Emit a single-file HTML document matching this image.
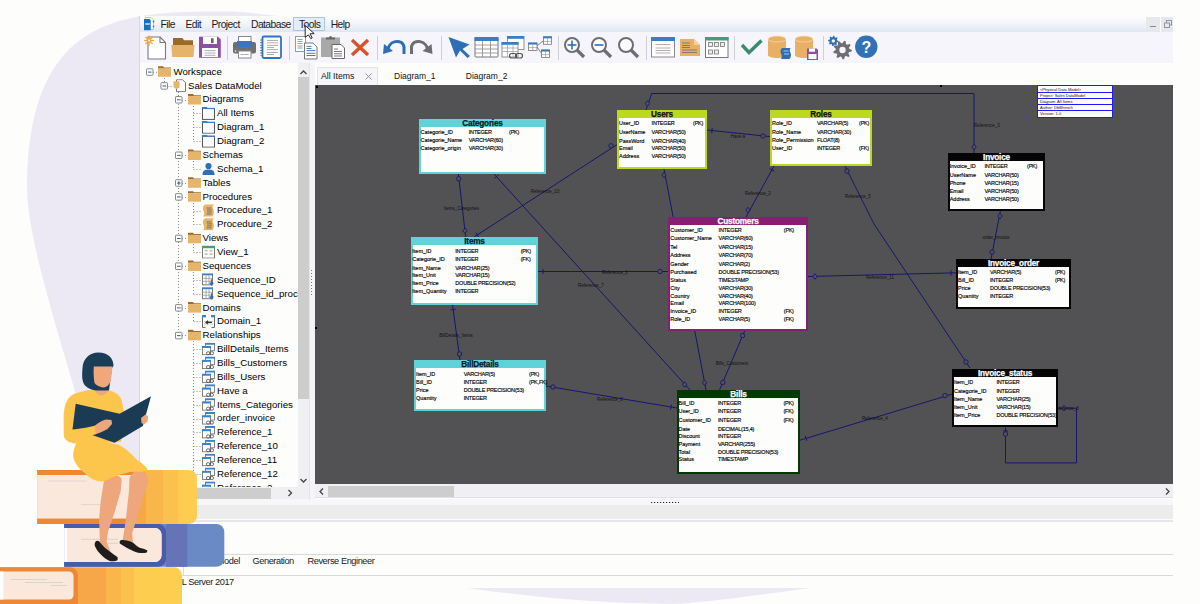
<!DOCTYPE html><html><head><meta charset="utf-8"><style>
*{margin:0;padding:0;box-sizing:border-box}
html,body{width:1200px;height:604px;overflow:hidden;background:#fdfdfc;font-family:"Liberation Sans",sans-serif}
body{position:relative}
.a{position:absolute}
.mi{position:absolute;top:18.5px;font-size:10.3px;letter-spacing:-0.55px;color:#1b1b1b;line-height:12px;white-space:nowrap}
.sep{position:absolute;top:36px;width:1px;height:24px;background:#cfd0d6}
.tr{position:absolute;font-size:9.7px;color:#000;line-height:11px;white-space:nowrap}
.tbl{position:absolute;background:#fdfdfc;border:2px solid}
.th{position:absolute;left:0;margin-top:0.3px;right:0;height:8px;font-weight:bold;-webkit-text-stroke:0.25px currentColor;font-size:8.2px;line-height:10px;text-align:center;letter-spacing:-0.2px;overflow:hidden}
.r{position:absolute;font-size:5.5px;line-height:6px;color:#000;white-space:nowrap;-webkit-text-stroke:0.15px #000}
.ty{letter-spacing:-0.2px}
.lbl{position:absolute;font-size:4.5px;line-height:5px;color:#111;white-space:nowrap}
</style></head><body><svg class="a" style="left:0;top:0" width="1200" height="604"><path fill="#ece9f4" d="M230,11.5 C129,11.5 27.2,9.7 27.2,190 C27.2,260 97.4,441.2 92.5,472 C85.6,515.2 424.6,603.9 672.7,603.9 C732.7,603.9 1184.1,530.8 950,560 L1100,400 L1100,300 C600,50 270,11.5 230,11.5 Z"/></svg>
<div class="a" style="left:139px;top:16px;width:1034px;height:571.5px;background:#fdfdfc;border-left:1px solid #d8d8dc"></div>
<div class="a" style="left:140px;top:16px;width:1006px;height:16px;background:linear-gradient(#fdfdfe,#eef2f8 60%,#dfe7f2)"></div>
<div class="a" style="left:1146px;top:17px;width:14px;height:15px;background:#e6e8ee"></div>
<div class="a" style="left:1161px;top:17px;width:12px;height:15px;background:#e6e8ee"></div>
<div class="a" style="left:1150px;top:25.5px;width:6px;height:1px;background:#8a8a8a"></div>
<svg class="a" style="left:1163.5px;top:20px" width="8" height="8"><rect x="2.5" y="0.5" width="5" height="4.5" fill="none" stroke="#8d98a4"/><rect x="0.5" y="3" width="5" height="4.5" fill="#e6e8ee" stroke="#8d98a4"/></svg>
<div class="a" style="left:293px;top:17px;width:32px;height:14px;background:#e3ecf7;border:1px solid #a9c6e6"></div>
<div class="mi" style="left:160.5px">File</div>
<div class="mi" style="left:185.5px">Edit</div>
<div class="mi" style="left:211.5px">Project</div>
<div class="mi" style="left:251px">Database</div>
<div class="mi" style="left:299px">Tools</div>
<div class="mi" style="left:330.7px">Help</div>
<svg class="a" style="left:140px;top:15px" width="20" height="18"><path d="M5.5,2.5 H11 L13.5,5 V14.5 H5.5z" fill="#fff" stroke="#9cc3e8" stroke-width="0.9"/><circle cx="13.5" cy="6.5" r="0.9" fill="#2f78c4"/><circle cx="13.5" cy="11.3" r="0.9" fill="#2f78c4"/><path d="M4,4 H9 C10,4 10.7,4.7 10.7,5.7 V15.3 H4z" fill="#1a6fc0"/><rect x="5.3" y="8" width="4.4" height="2" fill="#a9cdf0"/></svg>
<div class="a" style="left:140px;top:32px;width:1033px;height:31px;background:#f5f5fb"></div>
<div class="sep" style="left:227px"></div>
<div class="sep" style="left:289px"></div>
<div class="sep" style="left:377px"></div>
<div class="sep" style="left:441px"></div>
<div class="sep" style="left:558px"></div>
<div class="sep" style="left:646px"></div>
<div class="sep" style="left:734px"></div>
<div class="sep" style="left:823px"></div>
<svg class="a" style="left:0;top:0" width="900" height="64">
<path d="M148,37 H160 L165.5,42.5 V59 H148z" fill="#fff" stroke="#78787e" stroke-width="1.1"/><path d="M160,37 V42.5 H165.5" fill="none" stroke="#78787e" stroke-width="1.1"/>
<line x1="144.10" y1="40.50" x2="154.10" y2="40.50" stroke="#f3a43a" stroke-width="1.3"/><line x1="145.56" y1="36.96" x2="152.64" y2="44.04" stroke="#f3a43a" stroke-width="1.3"/><line x1="149.10" y1="35.50" x2="149.10" y2="45.50" stroke="#f3a43a" stroke-width="1.3"/><line x1="152.64" y1="36.96" x2="145.56" y2="44.04" stroke="#f3a43a" stroke-width="1.3"/><circle cx="149.1" cy="40.5" r="2.2" fill="#f3a43a"/><circle cx="149.1" cy="40.5" r="1" fill="#fff"/>
<path d="M173,38 H182.5 L184,40.2 H193 V45 H173z" fill="#9c6a28"/><path d="M171.3,45 H194.5 L193.5,57 H172.2z" fill="#e5b46a"/>
<path d="M199,36.8 H218 L220.8,39.6 V57.7 H199z" fill="#8b50a2"/><rect x="203" y="36.8" width="14" height="7.2" fill="#fff"/><rect x="211" y="38.2" width="2.6" height="4.9" fill="#666"/><rect x="202" y="48" width="16" height="9" fill="#fff"/><path d="M204.5,50.6 h11 M204.5,53 h11 M204.5,55.3 h11" stroke="#999" stroke-width="0.8"/>
<rect x="238.5" y="36.5" width="12.5" height="8" fill="#fff" stroke="#888" stroke-width="1"/><rect x="233" y="42" width="23" height="11.5" rx="2" fill="#6e6e73"/><rect x="237" y="41" width="15" height="6" fill="#3a75bf"/><rect x="238.5" y="51" width="12.5" height="7" fill="#fff" stroke="#888" stroke-width="1"/><path d="M240.5,54.5 h8" stroke="#999" stroke-width="0.8"/><circle cx="235.5" cy="51" r="0.8" fill="#fff"/>
<rect x="262.5" y="36.5" width="18.5" height="21.5" rx="1.5" fill="#fff" stroke="#2f74c0" stroke-width="1.8"/><path d="M267,40.5 h11 M267,42.8 h11 M267,45.4 h11 M267,47.5 h7 M267,49.6 h11 M267,52.5 h11 M267,54.5 h7" stroke="#9a9a9a" stroke-width="0.8"/><path d="M261,39.5 v16" stroke="#333" stroke-width="1.2" stroke-dasharray="1,1.6"/>
<rect x="295.5" y="36.5" width="10" height="15" fill="#fff" stroke="#999" stroke-width="1"/><path d="M297.5,39.5 h5 M297.5,41.5 h5 M297.5,43.5 h5 M297.5,46 h5 M297.5,48 h5" stroke="#4a90d0" stroke-width="0.8"/>
<path d="M304.5,43 H313 L317,47 V59 H304.5z" fill="#fff" stroke="#77777c" stroke-width="1"/><path d="M306.5,46.4 h5 M306.5,48.5 h5 M306.5,50.6 h9 M306.5,53.3 h9 M306.5,55.5 h9" stroke="#2e6fb8" stroke-width="0.9"/>
<rect x="321" y="37.5" width="19" height="19.5" fill="#a8a8a8"/><path d="M326,39.5 h9 v-2 h-3 a1.5,1.5 0 0 0 -3,0 h-3z" fill="#666"/><path d="M332,44.5 H341 L344.5,48 V58.5 H332z" fill="#fff" stroke="#666" stroke-width="1"/><path d="M334,49 h4 M334,51.5 h8 M334,53.8 h8 M334,56 h8" stroke="#555" stroke-width="0.8"/>
<path d="M352,40 L368,55 M368,40 L352,55" stroke="#d9502a" stroke-width="3.4"/>
<path d="M388,52 C387,40 403,38 404,47 V54" fill="none" stroke="#2f6db5" stroke-width="3"/><path d="M383,54 L384,44 L393,51z" fill="#2f6db5"/>
<path d="M427.5,52 C428.5,40 412.5,38 411.5,47 V54" fill="none" stroke="#6d6d72" stroke-width="3"/><path d="M432.5,54 L431.5,44 L422.5,51z" fill="#6d6d72"/>
<path d="M448.5,37 L469.5,44.5 L462.5,49 L470,56 L467.5,58 L460,50.5 L456,57.5z" fill="#2f6db5"/>
<rect x="475" y="37.5" width="23" height="19.5" rx="1" fill="#fff" stroke="#777" stroke-width="1"/><rect x="474.5" y="37" width="24" height="4" fill="#3b7dc4"/><path d="M475,45 h23 M475,49 h23 M475,53 h23 M482.5,41 v16 M490.5,41 v16" stroke="#888" stroke-width="0.8"/>
<rect x="507.5" y="36.5" width="16.5" height="13" fill="#fff" stroke="#888" stroke-width="0.9"/><rect x="507" y="36" width="17" height="2.8" fill="#3b7dc4"/><rect x="502" y="42.5" width="16" height="14.5" fill="#fff" stroke="#888" stroke-width="0.9"/><rect x="501.5" y="42" width="17" height="2.8" fill="#3b7dc4"/><path d="M502,48 h16 M502,51.5 h16 M507.5,45 v12 M513,45 v12" stroke="#999" stroke-width="0.7"/><rect x="509.5" y="53.5" width="7" height="4.5" rx="2.2" fill="none" stroke="#555" stroke-width="1.2"/><rect x="515.5" y="53.5" width="7" height="4.5" rx="2.2" fill="none" stroke="#555" stroke-width="1.2"/>
<path d="M537,46 L543,41 M537,47 L542,54" stroke="#666" stroke-width="0.8"/>
<rect x="528.5" y="43" width="8.5" height="7.5" fill="#fff" stroke="#777" stroke-width="0.8"/><rect x="528.1" y="42.6" width="9.3" height="2" fill="#3b7dc4"/><path d="M528.5,47.6 h8.5 M532.75,45 v5.5" stroke="#888" stroke-width="0.6"/>
<rect x="543.5" y="36.8" width="8" height="7.5" fill="#fff" stroke="#777" stroke-width="0.8"/><rect x="543.1" y="36.4" width="8.8" height="2" fill="#3b7dc4"/><path d="M543.5,41.4 h8 M547.5,38.8 v5.5" stroke="#888" stroke-width="0.6"/>
<rect x="541.5" y="50" width="8" height="7.5" fill="#fff" stroke="#777" stroke-width="0.8"/><rect x="541.1" y="49.6" width="8.8" height="2" fill="#3b7dc4"/><path d="M541.5,54.6 h8 M545.5,52 v5.5" stroke="#888" stroke-width="0.6"/>
<circle cx="572" cy="45" r="7" fill="#fff" stroke="#6d6d72" stroke-width="2"/><path d="M577,50 L584,57" stroke="#6d6d72" stroke-width="3.2"/>
<path d="M567.5,45 h9" stroke="#2f6db5" stroke-width="1.6"/>
<path d="M572,40.5 v9" stroke="#2f6db5" stroke-width="1.6"/>
<circle cx="599" cy="45" r="7" fill="#fff" stroke="#6d6d72" stroke-width="2"/><path d="M604,50 L611,57" stroke="#6d6d72" stroke-width="3.2"/>
<path d="M594.5,45 h9" stroke="#2f6db5" stroke-width="1.6"/>
<circle cx="626" cy="45" r="7" fill="#fff" stroke="#6d6d72" stroke-width="2"/><path d="M631,50 L638,57" stroke="#6d6d72" stroke-width="3.2"/>
<rect x="651.5" y="37.5" width="23" height="19.5" fill="#fff" stroke="#888" stroke-width="1"/><rect x="651" y="37" width="24" height="4" fill="#3b7dc4"/><path d="M655.5,44.5 h15 M655.5,48 h15 M655.5,50.5 h15 M655.5,53 h15" stroke="#a09a9a" stroke-width="0.8"/>
<path d="M680,39 H694 L700,45 V56 H680z" fill="#e9b064"/><path d="M694,39 V45 H700z" fill="#f5cf98"/><path d="M682,43 h8 M682,45.5 h8 M682,47.5 h8 M682,50 h15 M682,52.5 h15" stroke="#6e6a6a" stroke-width="0.8"/>
<rect x="705.5" y="37.5" width="22.5" height="20" fill="#fff" stroke="#777" stroke-width="1"/><rect x="705" y="37" width="23.5" height="3.5" fill="#4a9a7a"/>
<rect x="708.5" y="42.5" width="4" height="4" fill="#eee" stroke="#777" stroke-width="0.8"/>
<rect x="714.5" y="42.5" width="4" height="4" fill="#eee" stroke="#777" stroke-width="0.8"/>
<rect x="720.5" y="42.5" width="4" height="4" fill="#eee" stroke="#777" stroke-width="0.8"/>
<rect x="708.5" y="50" width="4" height="4" fill="#eee" stroke="#777" stroke-width="0.8"/>
<rect x="714.5" y="50" width="4" height="4" fill="#eee" stroke="#777" stroke-width="0.8"/>
<path d="M742,45 L749,52.5 L761.5,40.5" fill="none" stroke="#3f8a6e" stroke-width="3.4"/>
<path d="M768,39 V55 C768,59 786,59 786,55 V39z" fill="#e9b064"/><ellipse cx="777" cy="39" rx="9" ry="3" fill="#e9b064" stroke="#f8e4c4" stroke-width="0.6"/>
<path d="M782,48 h8.5 c-1,1.5 -1,3 0,5 c1,2 0.5,4 -1,6 h-8.5 c1,-1.5 1,-3.5 0,-5.5 c-1,-2 -0.5,-4 1,-5.5z" fill="#2f6db5"/><path d="M783.5,51 h5 M784,54 h5" stroke="#fff" stroke-width="0.6"/>
<path d="M795,39 V55 C795,59 813,59 813,55 V39z" fill="#e9b064"/><ellipse cx="804" cy="39" rx="9" ry="3" fill="#e9b064" stroke="#f8e4c4" stroke-width="0.6"/>
<path d="M807,48.5 H816.5 L818,50 V60 H807z" fill="#8b50a2"/><rect x="809" y="48.5" width="6" height="3.2" fill="#fff"/><rect x="808.5" y="54" width="8" height="5" fill="#fff"/>
<polygon points="851.80,50.00 851.66,51.61 848.89,52.33 848.39,53.40 849.62,55.98 848.48,57.12 845.90,55.89 844.83,56.39 844.11,59.16 842.50,59.30 841.32,56.70 840.17,56.39 837.85,58.05 836.52,57.12 837.29,54.37 836.61,53.40 833.76,53.18 833.34,51.61 835.70,50.00 835.80,48.82 833.76,46.82 834.45,45.35 837.29,45.63 838.13,44.79 837.85,41.95 839.32,41.26 841.32,43.30 842.50,43.20 844.11,40.84 845.68,41.26 845.90,44.11 846.87,44.79 849.62,44.02 850.55,45.35 848.89,47.67 849.20,48.82" fill="#6d6d72"/><circle cx="842.5" cy="50" r="3.2" fill="#f5f5fb"/>
<polygon points="838.50,40.90 838.40,41.91 836.81,42.35 836.46,43.01 836.98,44.58 836.19,45.22 834.75,44.41 834.04,44.63 833.30,46.10 832.29,46.00 831.85,44.41 831.19,44.06 829.62,44.58 828.98,43.79 829.79,42.35 829.57,41.64 828.10,40.90 828.20,39.89 829.79,39.45 830.14,38.79 829.62,37.22 830.41,36.58 831.85,37.39 832.56,37.17 833.30,35.70 834.31,35.80 834.75,37.39 835.41,37.74 836.98,37.22 837.62,38.01 836.81,39.45 837.03,40.16" fill="#2f6db5"/><circle cx="833.3" cy="40.9" r="1.7" fill="#f5f5fb"/>
<circle cx="866.3" cy="46.8" r="11.2" fill="#3371b6"/><text x="866.3" y="52.5" text-anchor="middle" font-family="Liberation Sans" font-weight="bold" font-size="16" fill="#fff">?</text>
<path d="M305.2,25.4 V37.3 L308.4,34.9 L310.8,38.6 L312.2,37.9 L310,33.8 L314.2,33.6z" fill="#fff" stroke="#111" stroke-width="0.9" stroke-linejoin="round"/>
</svg>
<div class="a" style="left:140px;top:63px;width:169px;height:437px;background:#fdfdfc"></div>
<svg class="a" style="left:140px;top:63px" width="158" height="424">
<defs>
<symbol id="i-folder" viewBox="0 0 13 12"><path d="M0,0.5 h5 l1,1.2 h7 v1 h-13z" fill="#9b6d2f"/><rect x="0" y="2.6" width="13" height="8.4" fill="#e6b46a"/></symbol>
<symbol id="i-model" viewBox="0 0 13 13"><path d="M3.5,0.5 h6 l3,3 v9 h-9z" fill="#fff" stroke="#666" stroke-width="0.9"/><path d="M0.5,2 h6 v6 l-3,2 l-3,-2z" fill="#e6b46a"/></symbol>
<symbol id="i-diag" viewBox="0 0 13 13"><rect x="0.5" y="1.5" width="12" height="11" fill="#fff" stroke="#555" stroke-width="1"/><path d="M0,0 h5 l1,2 h-6z" fill="#3b82c8"/><rect x="0" y="1.2" width="13" height="1" fill="#3b82c8"/></symbol>
<symbol id="i-user" viewBox="0 0 13 13"><circle cx="6.5" cy="3.6" r="3.1" fill="#2e6fb8"/><path d="M0.5,12.5 C0.5,7.5 3,7 6.5,7 C10,7 12.5,7.5 12.5,12.5z" fill="#2e6fb8"/></symbol>
<symbol id="i-scroll" viewBox="0 0 13 13"><path d="M3,0.5 h9 c-1.5,1 -1.5,2.5 -1,4 c1,2 1.5,5 -0.5,8 h-9.5 c1.5,-1.5 1.5,-3.5 0.5,-5.5 c-1,-2 -1,-4.5 1.5,-6.5z" fill="#e8b468"/><path d="M4.5,4 h5 M5,6 h5 M5,8 h5 M4.5,10 h5" stroke="#6b6b73" stroke-width="0.9"/></symbol>
<symbol id="i-view" viewBox="0 0 13 13"><rect x="0.5" y="1" width="12" height="11.5" fill="#fff" stroke="#777" stroke-width="1"/><rect x="0" y="0" width="13" height="2.6" fill="#4c9a7c"/><path d="M2.5,5 h3.2 M7.5,5 h3.2 M2.5,8.5 h3.2 M7.5,8.5 h3.2" stroke="#c4c4c4" stroke-width="1.6"/></symbol>
<symbol id="i-seq" viewBox="0 0 13 13"><rect x="0.5" y="1" width="10" height="10.5" fill="#fff" stroke="#777" stroke-width="1"/><rect x="0" y="0" width="11" height="2" fill="#3b82c8"/><path d="M0.5,5 h10 M0.5,8 h10 M4,2 v9.5 M7,2 v9.5" stroke="#999" stroke-width="0.8"/><path d="M9.5,6 v5 M7.7,9.3 l1.8,2.2 l1.8,-2.2" stroke="#2e6fb8" stroke-width="1.3" fill="none"/></symbol>
<symbol id="i-domain" viewBox="0 0 13 13"><path d="M0.5,1 v11.5 h3 M12.5,1 v11.5 h-3" stroke="#666" fill="none"/><rect x="0" y="0" width="4" height="2.4" fill="#3b82c8"/><rect x="9" y="0" width="4" height="2.4" fill="#3b82c8"/><path d="M2,6.5 h9 M2,9 h9" stroke="#bbb" stroke-width="0.7"/><path d="M10,7.5 h-6 M6,5.8 l-2,1.7 l2,1.7" stroke="#333" stroke-width="1.2" fill="none"/></symbol>
<symbol id="i-rel" viewBox="0 0 13 13"><rect x="3.5" y="1" width="9" height="7" fill="#fff" stroke="#777" stroke-width="0.9"/><rect x="3" y="0" width="10" height="2" fill="#3b82c8"/><rect x="0.5" y="4" width="8" height="8" fill="#fff" stroke="#777" stroke-width="0.9"/><rect x="0" y="3.3" width="9" height="2" fill="#3b82c8"/><rect x="4.5" y="9" width="3.5" height="3" rx="1.4" fill="none" stroke="#555" stroke-width="0.9"/><rect x="8" y="9" width="3.5" height="3" rx="1.4" fill="none" stroke="#555" stroke-width="0.9"/></symbol>
</defs>
<path d="M24.5,15 V22.67" stroke="#8a8a8a" stroke-width="1" stroke-dasharray="1,2"/>
<path d="M24.5,23.5 H20.5" stroke="#8a8a8a" stroke-width="1" stroke-dasharray="1,2"/>
<path d="M27.5,23.5 H33" stroke="#8a8a8a" stroke-width="1" stroke-dasharray="1,2"/>
<path d="M38.5,29 V272.33" stroke="#8a8a8a" stroke-width="1" stroke-dasharray="1,2"/>
<path d="M38.5,37.5 H35.0" stroke="#8a8a8a" stroke-width="1" stroke-dasharray="1,2"/>
<path d="M42.0,37.5 H48" stroke="#8a8a8a" stroke-width="1" stroke-dasharray="1,2"/>
<path d="M38.5,92.5 H35.0" stroke="#8a8a8a" stroke-width="1" stroke-dasharray="1,2"/>
<path d="M42.0,92.5 H48" stroke="#8a8a8a" stroke-width="1" stroke-dasharray="1,2"/>
<path d="M38.5,120.5 H35.0" stroke="#8a8a8a" stroke-width="1" stroke-dasharray="1,2"/>
<path d="M42.0,120.5 H48" stroke="#8a8a8a" stroke-width="1" stroke-dasharray="1,2"/>
<path d="M38.5,134.5 H35.0" stroke="#8a8a8a" stroke-width="1" stroke-dasharray="1,2"/>
<path d="M42.0,134.5 H48" stroke="#8a8a8a" stroke-width="1" stroke-dasharray="1,2"/>
<path d="M38.5,175.5 H35.0" stroke="#8a8a8a" stroke-width="1" stroke-dasharray="1,2"/>
<path d="M42.0,175.5 H48" stroke="#8a8a8a" stroke-width="1" stroke-dasharray="1,2"/>
<path d="M38.5,203.5 H35.0" stroke="#8a8a8a" stroke-width="1" stroke-dasharray="1,2"/>
<path d="M42.0,203.5 H48" stroke="#8a8a8a" stroke-width="1" stroke-dasharray="1,2"/>
<path d="M38.5,245.5 H35.0" stroke="#8a8a8a" stroke-width="1" stroke-dasharray="1,2"/>
<path d="M42.0,245.5 H48" stroke="#8a8a8a" stroke-width="1" stroke-dasharray="1,2"/>
<path d="M38.5,272.5 H35.0" stroke="#8a8a8a" stroke-width="1" stroke-dasharray="1,2"/>
<path d="M42.0,272.5 H48" stroke="#8a8a8a" stroke-width="1" stroke-dasharray="1,2"/>
<path d="M53.5,43 V78.14999999999998" stroke="#8a8a8a" stroke-width="1" stroke-dasharray="1,2"/>
<path d="M53.5,50.5 H62" stroke="#8a8a8a" stroke-width="1" stroke-dasharray="1,2"/>
<path d="M53.5,64.5 H62" stroke="#8a8a8a" stroke-width="1" stroke-dasharray="1,2"/>
<path d="M53.5,78.5 H62" stroke="#8a8a8a" stroke-width="1" stroke-dasharray="1,2"/>
<path d="M53.5,98 V105.88999999999999" stroke="#8a8a8a" stroke-width="1" stroke-dasharray="1,2"/>
<path d="M53.5,106.5 H62" stroke="#8a8a8a" stroke-width="1" stroke-dasharray="1,2"/>
<path d="M53.5,140 V161.37" stroke="#8a8a8a" stroke-width="1" stroke-dasharray="1,2"/>
<path d="M53.5,148.5 H62" stroke="#8a8a8a" stroke-width="1" stroke-dasharray="1,2"/>
<path d="M53.5,161.5 H62" stroke="#8a8a8a" stroke-width="1" stroke-dasharray="1,2"/>
<path d="M53.5,181 V189.11" stroke="#8a8a8a" stroke-width="1" stroke-dasharray="1,2"/>
<path d="M53.5,189.5 H62" stroke="#8a8a8a" stroke-width="1" stroke-dasharray="1,2"/>
<path d="M53.5,209 V230.71999999999997" stroke="#8a8a8a" stroke-width="1" stroke-dasharray="1,2"/>
<path d="M53.5,217.5 H62" stroke="#8a8a8a" stroke-width="1" stroke-dasharray="1,2"/>
<path d="M53.5,231.5 H62" stroke="#8a8a8a" stroke-width="1" stroke-dasharray="1,2"/>
<path d="M53.5,251 V258.46" stroke="#8a8a8a" stroke-width="1" stroke-dasharray="1,2"/>
<path d="M53.5,258.5 H62" stroke="#8a8a8a" stroke-width="1" stroke-dasharray="1,2"/>
<path d="M53.5,278 V424" stroke="#8a8a8a" stroke-width="1" stroke-dasharray="1,2"/>
<path d="M53.5,286.5 H62" stroke="#8a8a8a" stroke-width="1" stroke-dasharray="1,2"/>
<path d="M53.5,300.5 H62" stroke="#8a8a8a" stroke-width="1" stroke-dasharray="1,2"/>
<path d="M53.5,314.5 H62" stroke="#8a8a8a" stroke-width="1" stroke-dasharray="1,2"/>
<path d="M53.5,328.5 H62" stroke="#8a8a8a" stroke-width="1" stroke-dasharray="1,2"/>
<path d="M53.5,342.5 H62" stroke="#8a8a8a" stroke-width="1" stroke-dasharray="1,2"/>
<path d="M53.5,356.5 H62" stroke="#8a8a8a" stroke-width="1" stroke-dasharray="1,2"/>
<path d="M53.5,369.5 H62" stroke="#8a8a8a" stroke-width="1" stroke-dasharray="1,2"/>
<path d="M53.5,383.5 H62" stroke="#8a8a8a" stroke-width="1" stroke-dasharray="1,2"/>
<path d="M53.5,397.5 H62" stroke="#8a8a8a" stroke-width="1" stroke-dasharray="1,2"/>
<path d="M53.5,411.5 H62" stroke="#8a8a8a" stroke-width="1" stroke-dasharray="1,2"/>
<path d="M53.5,425.5 H62" stroke="#8a8a8a" stroke-width="1" stroke-dasharray="1,2"/>
<path d="M13.0,9.299999999999997 H18" stroke="#8a8a8a" stroke-width="1" stroke-dasharray="1,2"/>
<rect x="6.5" y="5.799999999999997" width="6.5" height="6.5" fill="#fff" stroke="#8a8a8a" stroke-width="1" rx="0.6"/>
<path d="M8.0,9.099999999999998 h3.6" stroke="#2e5c9a" stroke-width="1"/>
<use href="#i-folder" x="18" y="2.299999999999997" width="13" height="13"/>
<rect x="21" y="19.67" width="6.5" height="6.5" fill="#fff" stroke="#8a8a8a" stroke-width="1" rx="0.6"/>
<path d="M22.5,22.970000000000002 h3.6" stroke="#2e5c9a" stroke-width="1"/>
<use href="#i-model" x="33" y="16.17" width="13" height="13"/>
<rect x="35.5" y="33.53999999999999" width="6.5" height="6.5" fill="#fff" stroke="#8a8a8a" stroke-width="1" rx="0.6"/>
<path d="M37.0,36.83999999999999 h3.6" stroke="#2e5c9a" stroke-width="1"/>
<use href="#i-folder" x="48" y="30.039999999999992" width="13" height="13"/>
<use href="#i-diag" x="62" y="43.91" width="13" height="13"/>
<use href="#i-diag" x="62" y="57.78" width="13" height="13"/>
<use href="#i-diag" x="62" y="71.64999999999998" width="13" height="13"/>
<rect x="35.5" y="89.01999999999998" width="6.5" height="6.5" fill="#fff" stroke="#8a8a8a" stroke-width="1" rx="0.6"/>
<path d="M37.0,92.31999999999998 h3.6" stroke="#2e5c9a" stroke-width="1"/>
<use href="#i-folder" x="48" y="85.51999999999998" width="13" height="13"/>
<use href="#i-user" x="62" y="99.38999999999999" width="13" height="13"/>
<rect x="35.5" y="116.75999999999999" width="6.5" height="6.5" fill="#fff" stroke="#8a8a8a" stroke-width="1" rx="0.6"/>
<path d="M37.0,120.05999999999999 h3.6" stroke="#2e5c9a" stroke-width="1"/>
<path d="M38.8,118.25999999999999 v3.6" stroke="#2e5c9a" stroke-width="1"/>
<use href="#i-folder" x="48" y="113.25999999999999" width="13" height="13"/>
<rect x="35.5" y="130.63" width="6.5" height="6.5" fill="#fff" stroke="#8a8a8a" stroke-width="1" rx="0.6"/>
<path d="M37.0,133.93 h3.6" stroke="#2e5c9a" stroke-width="1"/>
<use href="#i-folder" x="48" y="127.13" width="13" height="13"/>
<use href="#i-scroll" x="62" y="141.0" width="13" height="13"/>
<use href="#i-scroll" x="62" y="154.87" width="13" height="13"/>
<rect x="35.5" y="172.24" width="6.5" height="6.5" fill="#fff" stroke="#8a8a8a" stroke-width="1" rx="0.6"/>
<path d="M37.0,175.54000000000002 h3.6" stroke="#2e5c9a" stroke-width="1"/>
<use href="#i-folder" x="48" y="168.74" width="13" height="13"/>
<use href="#i-view" x="62" y="182.61" width="13" height="13"/>
<rect x="35.5" y="199.97999999999996" width="6.5" height="6.5" fill="#fff" stroke="#8a8a8a" stroke-width="1" rx="0.6"/>
<path d="M37.0,203.27999999999997 h3.6" stroke="#2e5c9a" stroke-width="1"/>
<use href="#i-folder" x="48" y="196.47999999999996" width="13" height="13"/>
<use href="#i-seq" x="62" y="210.34999999999997" width="13" height="13"/>
<use href="#i-seq" x="62" y="224.21999999999997" width="13" height="13"/>
<rect x="35.5" y="241.58999999999997" width="6.5" height="6.5" fill="#fff" stroke="#8a8a8a" stroke-width="1" rx="0.6"/>
<path d="M37.0,244.89 h3.6" stroke="#2e5c9a" stroke-width="1"/>
<use href="#i-folder" x="48" y="238.08999999999997" width="13" height="13"/>
<use href="#i-domain" x="62" y="251.95999999999998" width="13" height="13"/>
<rect x="35.5" y="269.33" width="6.5" height="6.5" fill="#fff" stroke="#8a8a8a" stroke-width="1" rx="0.6"/>
<path d="M37.0,272.63 h3.6" stroke="#2e5c9a" stroke-width="1"/>
<use href="#i-folder" x="48" y="265.83" width="13" height="13"/>
<use href="#i-rel" x="62" y="279.7" width="13" height="13"/>
<use href="#i-rel" x="62" y="293.57" width="13" height="13"/>
<use href="#i-rel" x="62" y="307.44" width="13" height="13"/>
<use href="#i-rel" x="62" y="321.31" width="13" height="13"/>
<use href="#i-rel" x="62" y="335.18" width="13" height="13"/>
<use href="#i-rel" x="62" y="349.05" width="13" height="13"/>
<use href="#i-rel" x="62" y="362.92" width="13" height="13"/>
<use href="#i-rel" x="62" y="376.78999999999996" width="13" height="13"/>
<use href="#i-rel" x="62" y="390.65999999999997" width="13" height="13"/>
<use href="#i-rel" x="62" y="404.53" width="13" height="13"/>
<use href="#i-rel" x="62" y="418.4" width="13" height="13"/>
</svg>
<div class="a" style="left:140px;top:63px;width:158px;height:424px;overflow:hidden">
<div class="tr" style="left:33.5px;top:2.7px">Workspace</div>
<div class="tr" style="left:48px;top:16.6px">Sales DataModel</div>
<div class="tr" style="left:62.5px;top:30.4px">Diagrams</div>
<div class="tr" style="left:77px;top:44.3px">All Items</div>
<div class="tr" style="left:77px;top:58.2px">Diagram_1</div>
<div class="tr" style="left:77px;top:72.0px">Diagram_2</div>
<div class="tr" style="left:62.5px;top:85.9px">Schemas</div>
<div class="tr" style="left:77px;top:99.8px">Schema_1</div>
<div class="tr" style="left:62.5px;top:113.7px">Tables</div>
<div class="tr" style="left:62.5px;top:127.5px">Procedures</div>
<div class="tr" style="left:77px;top:141.4px">Procedure_1</div>
<div class="tr" style="left:77px;top:155.3px">Procedure_2</div>
<div class="tr" style="left:62.5px;top:169.1px">Views</div>
<div class="tr" style="left:77px;top:183.0px">View_1</div>
<div class="tr" style="left:62.5px;top:196.9px">Sequences</div>
<div class="tr" style="left:77px;top:210.7px">Sequence_ID</div>
<div class="tr" style="left:77px;top:224.6px">Sequence_id_proc</div>
<div class="tr" style="left:62.5px;top:238.5px">Domains</div>
<div class="tr" style="left:77px;top:252.4px">Domain_1</div>
<div class="tr" style="left:62.5px;top:266.2px">Relationships</div>
<div class="tr" style="left:77px;top:280.1px">BillDetails_Items</div>
<div class="tr" style="left:77px;top:294.0px">Bills_Customers</div>
<div class="tr" style="left:77px;top:307.8px">Bills_Users</div>
<div class="tr" style="left:77px;top:321.7px">Have a</div>
<div class="tr" style="left:77px;top:335.6px">Items_Categories</div>
<div class="tr" style="left:77px;top:349.4px">order_invoice</div>
<div class="tr" style="left:77px;top:363.3px">Reference_1</div>
<div class="tr" style="left:77px;top:377.2px">Reference_10</div>
<div class="tr" style="left:77px;top:391.1px">Reference_11</div>
<div class="tr" style="left:77px;top:404.9px">Reference_12</div>
<div class="tr" style="left:77px;top:418.8px">Reference_2</div>
</div>
<div class="a" style="left:298px;top:63px;width:11px;height:436px;background:#f0f0f2"></div>
<div class="a" style="left:298px;top:77px;width:11px;height:322px;background:#cdcdcd"></div>
<div class="a" style="left:309px;top:63px;width:6px;height:437px;background:#f4f4f9"></div>
<div class="a" style="left:315px;top:63px;width:858px;height:22px;background:#fdfdfc"></div>
<div class="a" style="left:317px;top:67px;width:61px;height:18px;background:#f6f6fa;border:1px solid #e2e2e8;border-bottom:none"></div>
<div class="a" style="left:321px;top:71.3px;font-size:8.7px;line-height:11px;color:#111;white-space:nowrap">All Items</div>
<svg class="a" style="left:365px;top:73px" width="7" height="7"><path d="M0.5,0.5 L6.5,6.5 M6.5,0.5 L0.5,6.5" stroke="#9a9a9a" stroke-width="1"/></svg>
<div class="a" style="left:394px;top:71.3px;font-size:8.5px;line-height:11px;color:#111;white-space:nowrap">Diagram_1</div>
<div class="a" style="left:465.8px;top:71.3px;font-size:8.5px;line-height:11px;color:#111;white-space:nowrap">Diagram_2</div>
<div class="a" id="cv" style="left:315px;top:85px;width:858px;height:399px;background:#525254;overflow:hidden"></div>
<svg class="a" style="left:0;top:0" width="1200" height="604">
<polyline points="458.4,174 465.7,237" fill="none" stroke="#16166e" stroke-width="1"/>
<polyline points="474,237 617,144.6" fill="none" stroke="#16166e" stroke-width="1"/>
<polyline points="494,174 690,390" fill="none" stroke="#16166e" stroke-width="1"/>
<polyline points="538,271.5 668,271.5" fill="none" stroke="#16166e" stroke-width="1"/>
<polyline points="452.5,304.7 460,360" fill="none" stroke="#16166e" stroke-width="1"/>
<polyline points="664,169 706,390" fill="none" stroke="#16166e" stroke-width="1"/>
<polyline points="546,386 677,408" fill="none" stroke="#16166e" stroke-width="1"/>
<polyline points="744.6,331 719.5,390" fill="none" stroke="#16166e" stroke-width="1"/>
<polyline points="646,110 651.7,93.5 974,93.5 974,153" fill="none" stroke="#16166e" stroke-width="1"/>
<polyline points="707,130 770,136.6" fill="none" stroke="#16166e" stroke-width="1"/>
<polyline points="774,166 746,217" fill="none" stroke="#16166e" stroke-width="1"/>
<polyline points="845,166 874,224 970,368" fill="none" stroke="#16166e" stroke-width="1"/>
<polyline points="1000.4,211 991,259" fill="none" stroke="#16166e" stroke-width="1"/>
<polyline points="808,276.5 956,272.8" fill="none" stroke="#16166e" stroke-width="1"/>
<polyline points="800,440.2 952,394.2" fill="none" stroke="#16166e" stroke-width="1"/>
<polyline points="1005.5,427.4 1005.5,462.9 1076.5,462.9 1076.5,408.2 1058,408.2" fill="none" stroke="#16166e" stroke-width="1"/>
<line x1="475.84" y1="232.71" x2="478.67" y2="237.08" stroke="#16166e" stroke-width="1"/>
<line x1="498.34" y1="174.92" x2="494.49" y2="178.41" stroke="#16166e" stroke-width="1"/>
<line x1="543.00" y1="268.90" x2="543.00" y2="274.10" stroke="#16166e" stroke-width="1"/>
<line x1="455.73" y1="309.16" x2="450.58" y2="309.86" stroke="#16166e" stroke-width="1"/>
<line x1="671.43" y1="404.43" x2="670.57" y2="409.56" stroke="#16166e" stroke-width="1"/>
<line x1="712.28" y1="127.94" x2="711.74" y2="133.11" stroke="#16166e" stroke-width="1"/>
<line x1="774.17" y1="171.08" x2="769.62" y2="168.58" stroke="#16166e" stroke-width="1"/>
<line x1="950.94" y1="270.33" x2="951.07" y2="275.52" stroke="#16166e" stroke-width="1"/>
<line x1="805.24" y1="435.90" x2="806.75" y2="440.87" stroke="#16166e" stroke-width="1"/>
<line x1="1008.10" y1="431.00" x2="1002.90" y2="431.00" stroke="#16166e" stroke-width="1"/>
<circle cx="458.7" cy="178.7" r="2.2" fill="#525254" stroke="#16166e" stroke-width="0.9"/>
<circle cx="611" cy="145.8" r="2.2" fill="#525254" stroke="#16166e" stroke-width="0.9"/>
<circle cx="660" cy="271.5" r="2.2" fill="#525254" stroke="#16166e" stroke-width="0.9"/>
<circle cx="459.5" cy="354" r="2.2" fill="#525254" stroke="#16166e" stroke-width="0.9"/>
<circle cx="553" cy="387" r="2.2" fill="#525254" stroke="#16166e" stroke-width="0.9"/>
<circle cx="742.6" cy="335.6" r="2.2" fill="#525254" stroke="#16166e" stroke-width="0.9"/>
<circle cx="722.8" cy="382.4" r="2.2" fill="#525254" stroke="#16166e" stroke-width="0.9"/>
<circle cx="763" cy="136" r="2.2" fill="#525254" stroke="#16166e" stroke-width="0.9"/>
<circle cx="847" cy="171" r="2.2" fill="#525254" stroke="#16166e" stroke-width="0.9"/>
<circle cx="966" cy="362" r="2.2" fill="#525254" stroke="#16166e" stroke-width="0.9"/>
<circle cx="992" cy="252" r="2.2" fill="#525254" stroke="#16166e" stroke-width="0.9"/>
<circle cx="945" cy="395.5" r="2.2" fill="#525254" stroke="#16166e" stroke-width="0.9"/>
<circle cx="1005.5" cy="434" r="2.2" fill="#525254" stroke="#16166e" stroke-width="0.9"/>
<path d="M465,227.89999999999998 L467.2,230.7 L465,233.5 L462.8,230.7Z" fill="#525254" stroke="#16166e" stroke-width="0.9"/>
<path d="M684.6,381.8 L686.8000000000001,384.6 L684.6,387.40000000000003 L682.4,384.6Z" fill="#525254" stroke="#16166e" stroke-width="0.9"/>
<path d="M664,172.2 L666.2,175 L664,177.8 L661.8,175Z" fill="#525254" stroke="#16166e" stroke-width="0.9"/>
<path d="M704.5,379.9 L706.7,382.7 L704.5,385.5 L702.3,382.7Z" fill="#525254" stroke="#16166e" stroke-width="0.9"/>
<path d="M647.5,100.7 L649.7,103.5 L647.5,106.3 L645.3,103.5Z" fill="#525254" stroke="#16166e" stroke-width="0.9"/>
<path d="M974,144.2 L976.2,147 L974,149.8 L971.8,147Z" fill="#525254" stroke="#16166e" stroke-width="0.9"/>
<path d="M748,207.2 L750.2,210 L748,212.8 L745.8,210Z" fill="#525254" stroke="#16166e" stroke-width="0.9"/>
<path d="M1000,213.2 L1002.2,216 L1000,218.8 L997.8,216Z" fill="#525254" stroke="#16166e" stroke-width="0.9"/>
<path d="M815,273.7 L817.2,276.5 L815,279.3 L812.8,276.5Z" fill="#525254" stroke="#16166e" stroke-width="0.9"/>
<path d="M1064,405.4 L1066.2,408.2 L1064,411.0 L1061.8,408.2Z" fill="#525254" stroke="#16166e" stroke-width="0.9"/>
</svg>
<div class="lbl" style="left:461.4px;top:205.5px;transform:translateX(-50%)">Items_Categories</div>
<div class="lbl" style="left:545.0px;top:188.5px;transform:translateX(-50%)">Reference_10</div>
<div class="lbl" style="left:591.0px;top:282.5px;transform:translateX(-50%)">Reference_7</div>
<div class="lbl" style="left:615.0px;top:270.0px;transform:translateX(-50%)">Reference_1</div>
<div class="lbl" style="left:456.0px;top:332.5px;transform:translateX(-50%)">BillDetails_Items</div>
<div class="lbl" style="left:610.0px;top:396.5px;transform:translateX(-50%)">Reference_6</div>
<div class="lbl" style="left:732.0px;top:360.5px;transform:translateX(-50%)">Bills_Customers</div>
<div class="lbl" style="left:987.0px;top:122.5px;transform:translateX(-50%)">Reference_3</div>
<div class="lbl" style="left:738.0px;top:133.5px;transform:translateX(-50%)">Have a</div>
<div class="lbl" style="left:758.0px;top:190.5px;transform:translateX(-50%)">Reference_2</div>
<div class="lbl" style="left:858.0px;top:193.5px;transform:translateX(-50%)">Reference_5</div>
<div class="lbl" style="left:996.0px;top:234.5px;transform:translateX(-50%)">order_invoice</div>
<div class="lbl" style="left:880.0px;top:274.5px;transform:translateX(-50%)">Reference_11</div>
<div class="lbl" style="left:875.0px;top:415.5px;transform:translateX(-50%)">Reference_4</div>
<div class="lbl" style="left:1066.0px;top:405.5px;transform:translateX(-50%)">Reference_8</div>
<div class="a" style="left:419px;top:119px;width:127px;height:55px;background:#5fd3d8"></div>
<div class="a" style="left:421px;top:127px;width:123px;height:45px;background:#fdfdfc"></div>
<div class="a th" style="left:419px;top:119px;width:127px;height:9px;color:#0a1a2a">Categories</div>
<div class="r" style="left:420.6px;top:129.3px">Categorie_ID</div>
<div class="r ty" style="left:468.8px;top:129.3px">INTEGER</div>
<div class="r ty" style="left:509.0px;top:129.3px">(PK)</div>
<div class="r" style="left:420.6px;top:137.4px">Categorie_Name</div>
<div class="r ty" style="left:468.8px;top:137.4px">VARCHAR(60)</div>
<div class="r" style="left:420.6px;top:145.3px">Categorie_origin</div>
<div class="r ty" style="left:468.8px;top:145.3px">VARCHAR(30)</div>
<div class="a" style="left:617px;top:110px;width:90px;height:59px;background:#bcd823"></div>
<div class="a" style="left:619px;top:118px;width:86px;height:49px;background:#fdfdfc"></div>
<div class="a th" style="left:617px;top:110px;width:90px;height:9px;color:#111">Users</div>
<div class="r" style="left:619.0px;top:120.4px">User_ID</div>
<div class="r ty" style="left:651.6px;top:120.4px">INTEGER</div>
<div class="r ty" style="left:693.0px;top:120.4px">(PK)</div>
<div class="r" style="left:619.0px;top:129.0px">UserName</div>
<div class="r ty" style="left:651.6px;top:129.0px">VARCHAR(50)</div>
<div class="r" style="left:619.0px;top:137.8px">PassWord</div>
<div class="r ty" style="left:651.6px;top:137.8px">VARCHAR(40)</div>
<div class="r" style="left:619.0px;top:145.2px">Email</div>
<div class="r ty" style="left:651.6px;top:145.2px">VARCHAR(50)</div>
<div class="r" style="left:619.0px;top:152.8px">Address</div>
<div class="r ty" style="left:651.6px;top:152.8px">VARCHAR(50)</div>
<div class="a" style="left:770px;top:110px;width:102px;height:56px;background:#bcd823"></div>
<div class="a" style="left:772px;top:118px;width:98px;height:46px;background:#fdfdfc"></div>
<div class="a th" style="left:770px;top:110px;width:102px;height:9px;color:#111">Roles</div>
<div class="r" style="left:772.0px;top:120.4px">Role_ID</div>
<div class="r ty" style="left:817.0px;top:120.4px">VARCHAR(5)</div>
<div class="r ty" style="left:859.0px;top:120.4px">(PK)</div>
<div class="r" style="left:772.0px;top:129.0px">Role_Name</div>
<div class="r ty" style="left:817.0px;top:129.0px">VARCHAR(30)</div>
<div class="r" style="left:772.0px;top:137.1px">Role_Permission</div>
<div class="r ty" style="left:817.0px;top:137.1px">FLOAT(8)</div>
<div class="r" style="left:772.0px;top:144.8px">User_ID</div>
<div class="r ty" style="left:817.0px;top:144.8px">INTEGER</div>
<div class="r ty" style="left:859.0px;top:144.8px">(FK)</div>
<div class="a" style="left:948px;top:153px;width:97px;height:58px;background:#050505"></div>
<div class="a" style="left:950px;top:161px;width:93px;height:48px;background:#fdfdfc"></div>
<div class="a th" style="left:948px;top:153px;width:97px;height:9px;color:#fff">Invoice</div>
<div class="r" style="left:949.7px;top:163.0px">Invoice_ID</div>
<div class="r ty" style="left:984.5px;top:163.0px">INTEGER</div>
<div class="r ty" style="left:1027.0px;top:163.0px">(PK)</div>
<div class="r" style="left:949.7px;top:171.6px">UserName</div>
<div class="r ty" style="left:984.5px;top:171.6px">VARCHAR(50)</div>
<div class="r" style="left:949.7px;top:179.8px">Phone</div>
<div class="r ty" style="left:984.5px;top:179.8px">VARCHAR(15)</div>
<div class="r" style="left:949.7px;top:187.8px">Email</div>
<div class="r ty" style="left:984.5px;top:187.8px">VARCHAR(50)</div>
<div class="r" style="left:949.7px;top:195.8px">Address</div>
<div class="r ty" style="left:984.5px;top:195.8px">VARCHAR(50)</div>
<div class="a" style="left:668px;top:217px;width:140px;height:114px;background:#861e72"></div>
<div class="a" style="left:670px;top:225px;width:136px;height:104px;background:#fdfdfc"></div>
<div class="a th" style="left:668px;top:217px;width:140px;height:9px;color:#fff">Customers</div>
<div class="r" style="left:670.3px;top:226.8px">Customer_ID</div>
<div class="r ty" style="left:718.6px;top:226.8px">INTEGER</div>
<div class="r ty" style="left:783.8px;top:226.8px">(PK)</div>
<div class="r" style="left:670.3px;top:235.4px">Customer_Name</div>
<div class="r ty" style="left:718.6px;top:235.4px">VARCHAR(60)</div>
<div class="r" style="left:670.3px;top:243.8px">Tel</div>
<div class="r ty" style="left:718.6px;top:243.8px">VARCHAR(15)</div>
<div class="r" style="left:670.3px;top:252.2px">Address</div>
<div class="r ty" style="left:718.6px;top:252.2px">VARCHAR(70)</div>
<div class="r" style="left:670.3px;top:260.8px">Gender</div>
<div class="r ty" style="left:718.6px;top:260.8px">VARCHAR(2)</div>
<div class="r" style="left:670.3px;top:269.2px">Purchased</div>
<div class="r ty" style="left:718.6px;top:269.2px">DOUBLE PRECISION(53)</div>
<div class="r" style="left:670.3px;top:277.0px">Status</div>
<div class="r ty" style="left:718.6px;top:277.0px">TIMESTAMP</div>
<div class="r" style="left:670.3px;top:284.8px">City</div>
<div class="r ty" style="left:718.6px;top:284.8px">VARCHAR(30)</div>
<div class="r" style="left:670.3px;top:292.5px">Country</div>
<div class="r ty" style="left:718.6px;top:292.5px">VARCHAR(40)</div>
<div class="r" style="left:670.3px;top:300.2px">Email</div>
<div class="r ty" style="left:718.6px;top:300.2px">VARCHAR(100)</div>
<div class="r" style="left:670.3px;top:307.8px">Invoice_ID</div>
<div class="r ty" style="left:718.6px;top:307.8px">INTEGER</div>
<div class="r ty" style="left:783.8px;top:307.8px">(FK)</div>
<div class="r" style="left:670.3px;top:315.5px">Role_ID</div>
<div class="r ty" style="left:718.6px;top:315.5px">VARCHAR(5)</div>
<div class="r ty" style="left:783.8px;top:315.5px">(FK)</div>
<div class="a" style="left:411px;top:237px;width:127px;height:68px;background:#5fd3d8"></div>
<div class="a" style="left:413px;top:245px;width:123px;height:58px;background:#fdfdfc"></div>
<div class="a th" style="left:411px;top:237px;width:127px;height:9px;color:#0a1a2a">Items</div>
<div class="r" style="left:412.3px;top:247.8px">Item_ID</div>
<div class="r ty" style="left:455.3px;top:247.8px">INTEGER</div>
<div class="r ty" style="left:520.7px;top:247.8px">(PK)</div>
<div class="r" style="left:412.3px;top:256.1px">Categorie_ID</div>
<div class="r ty" style="left:455.3px;top:256.1px">INTEGER</div>
<div class="r ty" style="left:520.7px;top:256.1px">(FK)</div>
<div class="r" style="left:412.3px;top:264.8px">Item_Name</div>
<div class="r ty" style="left:455.3px;top:264.8px">VARCHAR(25)</div>
<div class="r" style="left:412.3px;top:272.3px">Item_Unit</div>
<div class="r ty" style="left:455.3px;top:272.3px">VARCHAR(15)</div>
<div class="r" style="left:412.3px;top:280.0px">Item_Price</div>
<div class="r ty" style="left:455.3px;top:280.0px">DOUBLE PRECISION(52)</div>
<div class="r" style="left:412.3px;top:287.8px">Item_Quantity</div>
<div class="r ty" style="left:455.3px;top:287.8px">INTEGER</div>
<div class="a" style="left:414px;top:360px;width:132px;height:51px;background:#5fd3d8"></div>
<div class="a" style="left:416px;top:368px;width:128px;height:41px;background:#fdfdfc"></div>
<div class="a th" style="left:414px;top:360px;width:132px;height:9px;color:#0a1a2a">BillDetails</div>
<div class="r" style="left:416.0px;top:370.8px">Item_ID</div>
<div class="r ty" style="left:463.7px;top:370.8px">VARCHAR(5)</div>
<div class="r ty" style="left:529.0px;top:370.8px">(PK)</div>
<div class="r" style="left:416.0px;top:379.1px">Bill_ID</div>
<div class="r ty" style="left:463.7px;top:379.1px">INTEGER</div>
<div class="r ty" style="left:529.0px;top:379.1px">(PK,FK)</div>
<div class="r" style="left:416.0px;top:387.1px">Price</div>
<div class="r ty" style="left:463.7px;top:387.1px">DOUBLE PRECISION(53)</div>
<div class="r" style="left:416.0px;top:394.8px">Quantity</div>
<div class="r ty" style="left:463.7px;top:394.8px">INTEGER</div>
<div class="a" style="left:677px;top:390px;width:123px;height:84px;background:#033a03"></div>
<div class="a" style="left:679px;top:398px;width:119px;height:74px;background:#fdfdfc"></div>
<div class="a th" style="left:677px;top:390px;width:123px;height:9px;color:#fff">Bills</div>
<div class="r" style="left:678.5px;top:400.0px">Bill_ID</div>
<div class="r ty" style="left:718.0px;top:400.0px">INTEGER</div>
<div class="r ty" style="left:783.4px;top:400.0px">(PK)</div>
<div class="r" style="left:678.5px;top:408.4px">User_ID</div>
<div class="r ty" style="left:718.0px;top:408.4px">INTEGER</div>
<div class="r ty" style="left:783.4px;top:408.4px">(FK)</div>
<div class="r" style="left:678.5px;top:416.9px">Customer_ID</div>
<div class="r ty" style="left:718.0px;top:416.9px">INTEGER</div>
<div class="r ty" style="left:783.4px;top:416.9px">(FK)</div>
<div class="r" style="left:678.5px;top:425.5px">Date</div>
<div class="r ty" style="left:718.0px;top:425.5px">DECIMAL(15,4)</div>
<div class="r" style="left:678.5px;top:432.8px">Discount</div>
<div class="r ty" style="left:718.0px;top:432.8px">INTEGER</div>
<div class="r" style="left:678.5px;top:440.8px">Payment</div>
<div class="r ty" style="left:718.0px;top:440.8px">VARCHAR(255)</div>
<div class="r" style="left:678.5px;top:448.5px">Total</div>
<div class="r ty" style="left:718.0px;top:448.5px">DOUBLE PRECISION(53)</div>
<div class="r" style="left:678.5px;top:456.1px">Status</div>
<div class="r ty" style="left:718.0px;top:456.1px">TIMESTAMP</div>
<div class="a" style="left:956px;top:259px;width:115px;height:50px;background:#050505"></div>
<div class="a" style="left:958px;top:267px;width:111px;height:40px;background:#fdfdfc"></div>
<div class="a th" style="left:956px;top:259px;width:115px;height:9px;color:#fff">Invoice_order</div>
<div class="r" style="left:958.0px;top:269.3px">Item_ID</div>
<div class="r ty" style="left:990.0px;top:269.3px">VARCHAR(5)</div>
<div class="r ty" style="left:1055.0px;top:269.3px">(PK)</div>
<div class="r" style="left:958.0px;top:277.4px">Bill_ID</div>
<div class="r ty" style="left:990.0px;top:277.4px">INTEGER</div>
<div class="r ty" style="left:1055.0px;top:277.4px">(PK)</div>
<div class="r" style="left:958.0px;top:285.3px">Price</div>
<div class="r ty" style="left:990.0px;top:285.3px">DOUBLE PRECISION(53)</div>
<div class="r" style="left:958.0px;top:292.8px">Quantity</div>
<div class="r ty" style="left:990.0px;top:292.8px">INTEGER</div>
<div class="a" style="left:952px;top:369px;width:106px;height:58px;background:#050505"></div>
<div class="a" style="left:954px;top:377px;width:102px;height:48px;background:#fdfdfc"></div>
<div class="a th" style="left:952px;top:369px;width:106px;height:9px;color:#fff">Invoice_status</div>
<div class="r" style="left:954.0px;top:379.0px">Item_ID</div>
<div class="r ty" style="left:996.4px;top:379.0px">INTEGER</div>
<div class="r" style="left:954.0px;top:387.7px">Categorie_ID</div>
<div class="r ty" style="left:996.4px;top:387.7px">INTEGER</div>
<div class="r" style="left:954.0px;top:396.0px">Item_Name</div>
<div class="r ty" style="left:996.4px;top:396.0px">VARCHAR(25)</div>
<div class="r" style="left:954.0px;top:404.1px">Item_Unit</div>
<div class="r ty" style="left:996.4px;top:404.1px">VARCHAR(15)</div>
<div class="r" style="left:954.0px;top:411.8px">Item_Price</div>
<div class="r ty" style="left:996.4px;top:411.8px">DOUBLE PRECISION(53)</div>
<div class="a" style="left:1037px;top:85px;width:76px;height:33px;background:#fdfdfc;border:1.6px solid #1c1cf0"></div>
<div class="lbl" style="left:1040px;top:86.5px;font-size:4px;line-height:5px">&lt;Physical Data Model&gt;</div>
<div class="a" style="left:1038px;top:91.7px;width:74px;height:1px;background:#1c1cf0"></div>
<div class="lbl" style="left:1040px;top:92.7px;font-size:4px;line-height:5px">Project: Sales DataModel</div>
<div class="a" style="left:1038px;top:97.9px;width:74px;height:1px;background:#1c1cf0"></div>
<div class="lbl" style="left:1040px;top:98.9px;font-size:4px;line-height:5px">Diagram: All Items</div>
<div class="a" style="left:1038px;top:104.1px;width:74px;height:1px;background:#1c1cf0"></div>
<div class="lbl" style="left:1040px;top:105.1px;font-size:4px;line-height:5px">Author: DbWrench</div>
<div class="a" style="left:1038px;top:110.3px;width:74px;height:1px;background:#1c1cf0"></div>
<div class="lbl" style="left:1040px;top:111.3px;font-size:4px;line-height:5px">Version: 1.0</div>
<div class="a" style="left:316px;top:86px;width:2px;height:2px;background:#000"></div>
<div class="a" style="left:940px;top:85px;width:2px;height:2px;background:#000"></div>
<div class="a" style="left:315px;top:327px;width:2px;height:2px;background:#000"></div>
<div class="a" style="left:315px;top:484px;width:858px;height:14px;background:#f0f0f4;border-bottom:1px solid #e0e0e6"></div>
<div class="a" style="left:328px;top:486px;width:126px;height:11px;background:#cdcdcd"></div>
<div class="a" style="left:140px;top:487px;width:158px;height:12px;background:#f0f0f2"></div>
<div class="a" style="left:140px;top:488px;width:131px;height:11px;background:#cdcdcd"></div>
<div class="a" style="left:140px;top:499px;width:1033px;height:6px;background:#f6f6fb"></div>
<div class="a" style="left:140px;top:505px;width:1033px;height:14px;background:#ececec"></div>
<div class="a" style="left:140px;top:520px;width:1033px;height:2px;background:#e6e6ea"></div>
<div class="a" style="left:140px;top:554px;width:1033px;height:1px;background:#d9d9d9"></div>
<div class="a" style="left:140px;top:575px;width:1033px;height:1px;background:#d9d9d9"></div>
<div class="a" style="left:216.8px;top:556.3px;font-size:9.25px;letter-spacing:-0.45px;line-height:11px;color:#1a1a1a;white-space:nowrap">Model</div>
<div class="a" style="left:252.5px;top:556.3px;font-size:9.25px;letter-spacing:-0.45px;line-height:11px;color:#1a1a1a;white-space:nowrap">Generation</div>
<div class="a" style="left:307.5px;top:556.3px;font-size:9.25px;letter-spacing:-0.45px;line-height:11px;color:#1a1a1a;white-space:nowrap">Reverse Engineer</div>
<div class="a" style="left:183px;top:555px;width:1px;height:20px;background:#dcdcdc"></div>
<div class="a" style="left:169.4px;top:576.5px;font-size:9.25px;letter-spacing:-0.45px;line-height:11px;color:#1a1a1a;white-space:nowrap">SQL Server 2017</div>
<svg class="a" style="left:0;top:0" width="1200" height="604"><path d="M300.5,74 L303.5,71 L306.5,74" fill="none" stroke="#444" stroke-width="1.3"/><path d="M300.5,479 L303.5,482 L306.5,479" fill="none" stroke="#444" stroke-width="1.3"/><path d="M288.5,490 L291.5,493 L288.5,496" fill="none" stroke="#444" stroke-width="1.3"/><path d="M323,488.5 L320,491.5 L323,494.5" fill="none" stroke="#444" stroke-width="1.3"/><path d="M1166,488.5 L1169,491.5 L1166,494.5" fill="none" stroke="#444" stroke-width="1.3"/><path d="M651,502.5 h28" stroke="#222" stroke-width="1.2" stroke-dasharray="1.2,1.8"/><path d="M311.5,270 v27" stroke="#777" stroke-width="1" stroke-dasharray="1,2"/><path d="M309.5,63 v437" stroke="#e4e4ea" stroke-width="1"/></svg>
<svg class="a" style="left:0;top:340px" width="240" height="264" viewBox="0 340 240 264">
<defs>
<linearGradient id="g1" x1="133" x2="197" gradientUnits="userSpaceOnUse">
<stop offset="0" stop-color="#f6a845"/><stop offset="0.2" stop-color="#f6a845"/><stop offset="0.2" stop-color="#f9b64a"/><stop offset="0.47" stop-color="#f9b64a"/><stop offset="0.47" stop-color="#fbc04d"/><stop offset="0.7" stop-color="#fbc04d"/><stop offset="0.7" stop-color="#fdcb50"/><stop offset="1" stop-color="#fdcd50"/></linearGradient>
<linearGradient id="g3" x1="76" x2="182" gradientUnits="userSpaceOnUse">
<stop offset="0" stop-color="#f7a748"/><stop offset="0.28" stop-color="#f7a748"/><stop offset="0.28" stop-color="#fab64b"/><stop offset="0.42" stop-color="#fab64b"/><stop offset="0.42" stop-color="#fcc14d"/><stop offset="0.55" stop-color="#fcc14d"/><stop offset="0.55" stop-color="#fdcc50"/><stop offset="1" stop-color="#fdcf50"/></linearGradient>
</defs>
<!-- book3 -->
<path d="M-5,567.3 H174 a8,8 0 0 1 8,8 V610 H-5z" fill="url(#g3)"/>
<path d="M-5,567.3 H70 a8,8 0 0 1 8,8 V610 H-5z" fill="#ef8834"/>
<path d="M-5,571.5 H69 a4.5,4.5 0 0 1 4.5,4.5 V595 a4.5,4.5 0 0 1 -4.5,4.5 H-5z" fill="#fae8dc"/><rect x="0" y="571.5" width="3.5" height="28" fill="#fdfdfc"/>
<path d="M11,579.5 h36 M25,582.5 h38 M51,585.5 h16" stroke="#cfd0c8" stroke-width="0.8"/>
<!-- book2 -->
<path d="M64.1,523.9 H216.3 a8,8 0 0 1 8,8 V558.8 a8,8 0 0 1 -8,8 H64.1z" fill="#6a8ac6"/>
<rect x="165.9" y="523.9" width="21.4" height="42.9" fill="#6474b6"/>
<path d="M64.1,523.9 H158 a8,8 0 0 1 8,8 V558.8 a8,8 0 0 1 -8,8 H64.1z" fill="#4a5ba8"/>
<path d="M64.1,528 H155 a6.5,6.5 0 0 1 6.5,6.5 V555.5 a6.5,6.5 0 0 1 -6.5,6.5 H64.1z" fill="#fdfdfc"/><path d="M67,528 H155 a6.5,6.5 0 0 1 6.5,6.5 V555.5 a6.5,6.5 0 0 1 -6.5,6.5 H67z" fill="#fae8dc"/>
<path d="M81,539.3 h37 M108,543.3 h10" stroke="#d6cccc" stroke-width="0.8"/>
<!-- book1 -->
<path d="M37.2,470 H189 a7.9,7.9 0 0 1 7.9,7.9 V516 a7.9,7.9 0 0 1 -7.9,7.9 H37.2z" fill="url(#g1)"/>
<rect x="37.2" y="470" width="96" height="5" fill="#ef8834"/>
<rect x="37.2" y="518.5" width="96" height="5.4" fill="#ef8834"/>
<rect x="37.2" y="475" width="96" height="43.5" fill="#fae8dc"/>
<path d="M48,481 h39 M81,504.5 h37" stroke="#dccfd0" stroke-width="0.8"/>
<!-- legs -->
<path d="M104,480 C108,476 114,475 118.1,475.8 C121,477 122,479.5 121.4,483 L120.6,491.5 L114.8,511.4 L108.2,531.2 L106.5,541.2 L111.5,554.4 L100,548 L99.9,541.2 L99.1,519.6 L100.7,501.4 Z" fill="#eea67c"/>
<path d="M129.5,478 C132,472 137,471 139.6,471.6 C144,472 147,474 147.9,478 C148.5,483 146.5,488 144.6,493.1 L138,514.7 L132.2,532.9 L133,542.8 L139.6,547.8 L124,545 L122.3,541.2 L123.9,532.9 L126.4,514.7 L128.9,491.5 Z" fill="#eea67c"/>
<!-- shoes -->
<path d="M95.8,541.2 C94.5,542.5 94.5,545 94.9,546.1 C96.5,550 99,553 101.6,555.2 C104.5,558 107,560 109.8,561 C113,561.5 116,561 117.3,560.2 C118,559 117.8,557.5 117.3,556.9 C115,555 113,554 111.5,552.7 C109,551 107,549.5 104.9,547.8 C102.5,545.5 100.5,543 99.1,541.2 C98,540.5 96.5,540.5 95.8,541.2 Z" fill="#1f1d1c"/>
<path d="M120.6,540.3 C119.5,541 119.5,542.5 119.8,543.6 C122.5,545.5 125,547 128,548.6 C131.5,550.5 135,552 138,552.7 C141,553.2 144,553.2 146.3,552.7 C147.3,552 147.5,551 147.1,550.3 C145,549 142,548.5 139.6,547.8 C137,546.5 135,544.5 133,542.8 C130.5,541.5 127.5,540.5 124.7,540.3 C123,540 121.5,540 120.6,540.3 Z" fill="#1f1d1c"/>
<!-- skirt -->
<path d="M82,438 L118.4,444.5 C125,448 132,454 137,460 C142,463 147,467 148,470.5 C146,472 138,471.5 130,472 C124,474 118,474.5 113,477 C108,479.5 104,481.5 101.6,481.6 C95,481 89,478 85,473.3 C77,467 72.5,460 73.2,454 C74,446 77.5,440 82,438 Z" fill="#fcc54b"/>
<!-- torso -->
<path d="M88,390 L109,390.5 C115,392 119.5,394.5 121.5,400 L124.5,414 L121,442 L80,444 C72,444 64.5,441 63.8,436 L63.6,416 C64,404 68,396 75,393.5 Z" fill="#fcc54b"/>
<!-- neck -->
<path d="M95.5,381 L107.5,381 L108,391 C104,397 99,397 95,391 Z" fill="#eea67c"/>
<!-- held book -->
<path d="M75.7,403.8 L119.6,413.7 L151,396.3 L142.8,426 L114.6,442.7 L90.6,434.4 L72.4,430.3 Z" fill="#1b3b55"/>
<!-- forearm -->
<path d="M64,429 C70,431 85,428 95.6,425.5 L96.5,434 C86,437 74,441 70,441 C66,440.5 64,437 64,434 Z" fill="#fcc54b"/>
<!-- hands -->
<path d="M94.5,426 C98,423 102,420.5 106,419.5 L111.5,420 L112,424 L107.5,429 C104,431 99,433.5 96,434 Z" fill="#eea67c"/>
<path d="M141,418 L145.5,414.5 L148,416 L147.5,421.5 L144,424.5 L141.5,423 Z" fill="#eea67c"/>
<!-- hair -->
<path d="M98.5,352.5 C89,352.5 83,359 82.5,368 C82,375 81.5,381 85,385.5 C88,388.5 92,390 96,390.5 L109,390.5 L112,368 L113.5,366 C113.5,358 108,352.5 98.5,352.5 Z" fill="#1c3d57"/>
<!-- face -->
<path d="M93.8,366.5 L112.5,366.5 L111,379.5 C110,384.5 106.5,387.5 103,387.5 C99,386.5 96,385 94.5,383 C93.5,378 93.5,372 93.8,366.5 Z" fill="#efa77b"/>
</svg></body></html>
